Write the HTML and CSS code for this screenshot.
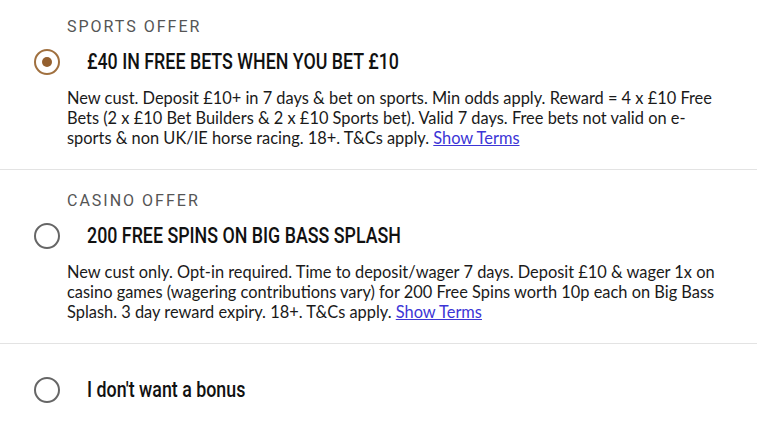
FILE: index.html
```html
<!DOCTYPE html>
<html lang="en">
<head>
<meta charset="utf-8">
<title>Welcome offers</title>
<link rel="stylesheet" href="styles.css">
</head>
<body>
<div class="offers">
  <section class="offer offer--first">
    <div class="offer-label">SPORTS OFFER</div>
    <div class="offer-row">
      <span class="radio radio--checked"><span class="radio-dot"></span></span>
      <span class="offer-title"><span class="cond">£40 IN FREE BETS WHEN YOU BET £10</span></span>
    </div>
    <p class="offer-desc">New cust. Deposit £10+ in 7 days &amp; bet on sports. Min odds apply. Reward = 4 x £10 Free Bets (2 x £10 Bet Builders &amp; 2 x £10 Sports bet). Valid 7 days. Free bets not valid on e-sports &amp; non UK/IE horse racing. 18+. T&amp;Cs apply. <a href="#" class="terms">Show Terms</a></p>
  </section>
  <section class="offer">
    <div class="offer-label">CASINO OFFER</div>
    <div class="offer-row">
      <span class="radio"></span>
      <span class="offer-title"><span class="cond">200 FREE SPINS ON BIG BASS SPLASH</span></span>
    </div>
    <p class="offer-desc">New cust only. Opt-in required. Time to deposit/wager 7 days. Deposit £10 &amp; wager 1x on casino games (wagering contributions vary) for 200 Free Spins worth 10p each on Big Bass Splash. 3 day reward expiry. 18+. T&amp;Cs apply. <a href="#" class="terms">Show Terms</a></p>
  </section>
  <section class="offer offer--none">
    <div class="offer-row">
      <span class="radio"></span>
      <span class="offer-title"><span class="cond">I don't want a bonus</span></span>
    </div>
  </section>
</div>
</body>
</html>
```

FILE: styles.css
```css
* { box-sizing: border-box; }
html, body { margin: 0; padding: 0; background: #fff; }
body { font-family: Lato, "Liberation Sans", sans-serif; color: #1a1a1a; }

.offers { width: 757px; }

.offer {
  padding: 21px 34px 21px 34px;
  border-bottom: 1px solid #e3e3e3;
}
.offer--first { padding-top: 17px; }
.offer--none { border-bottom: none; padding-top: 33px; }

.offer-label {
  margin-left: 33px;
  font-family: Roboto, sans-serif;
  font-size: 16px;
  line-height: 20px;
  letter-spacing: 2px;
  color: #555;
}

.offer-row {
  display: flex;
  align-items: center;
  height: 26px;
  margin-top: 12px;
}
.offer--none .offer-row { margin-top: 0; }

.radio {
  flex: 0 0 26px;
  width: 26px;
  height: 26px;
  border: 2px solid #666;
  border-radius: 50%;
  display: flex;
  align-items: center;
  justify-content: center;
}
.radio--checked { border-color: #a0703f; }
.radio-dot {
  width: 10px;
  height: 10px;
  border-radius: 50%;
  background: #94602f;
}

.offer-title {
  margin-left: 27px;
  font-family: Roboto, sans-serif;
  font-weight: 500;
  font-size: 22px;
  line-height: 26px;
  color: #111;
  white-space: nowrap;
}
.cond {
  display: inline-block;
  transform: scaleX(0.81);
  transform-origin: left center;
}

.offer-desc {
  margin: 13px 0 0 33px;
  width: 662px;
  font-size: 16.4px;
  line-height: 20px;
  color: #1a1a1a;
}
.terms { color: #3c35d6; text-decoration: underline; }
```
